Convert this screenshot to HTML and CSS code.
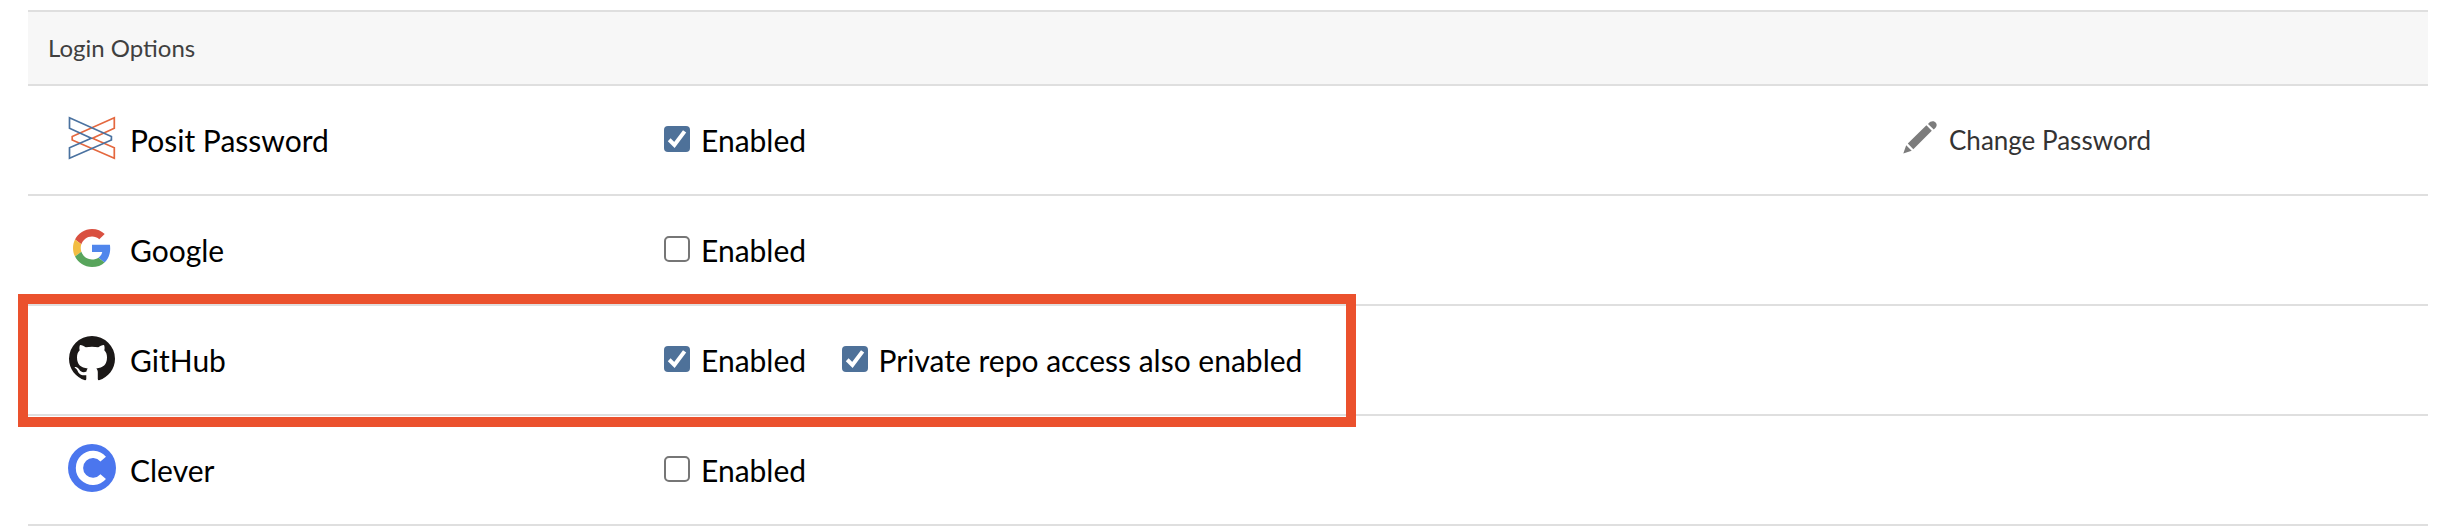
FILE: index.html
```html
<!DOCTYPE html>
<html lang="en">
<head>
<meta charset="utf-8">
<title>Login Options</title>
<link rel="stylesheet" href="styles.css">
</head>
<body>
<main class="panel">
  <header class="panel-head">Login Options</header>

  <section class="row">
    <div class="provider">
      <svg class="logo" viewBox="0 0 48 48" fill="none" stroke-width="1.7">
        <path stroke="#e4683f" d="M46.300 3.800V14.300L24.500 24.200L46.300 33.800V44.300L4.200 26V22.500Z"/>
        <path stroke="#4a72a0" d="M1.500 3.800V14.300L23.300 24.200L1.500 33.800V44.300L43.400 26V22.500Z"/>
      </svg>
      <span class="name">Posit Password</span>
    </div>
    <div class="options">
      <label class="option"><span class="box checked"><svg viewBox="0 0 26 26"><path d="M5.200 13.800L10.400 18.900L20.600 5.400"/></svg></span><span class="text">Enabled</span></label>
    </div>
    <a class="action">
      <svg class="pencil" viewBox="0 0 34 33"><path d="M0.300 32.600L3.200 24.200L8.700 29.700ZM4.800 22.500L23.400 4.200L28.800 9.700L10.300 28.200ZM25 2.900C27.800-.4 31.300-.3 33 2C34.400 4.200 33.600 6.200 30.800 8.500Z"/></svg>
      <span>Change Password</span>
    </a>
  </section>

  <section class="row">
    <div class="provider">
      <svg class="logo google" viewBox="0 0 48 48">
        <path fill="#d95040" d="M24 9.500c3.540 0 6.710 1.220 9.210 3.600l6.850-6.850C35.900 2.380 30.470 0 24 0 14.620 0 6.510 5.380 2.560 13.220l7.980 6.190C12.430 13.720 17.740 9.500 24 9.500z"/>
        <path fill="#5086ec" d="M46.980 24.550c0-1.570-.15-3.090-.38-4.550H24v9.020h12.940c-.58 2.960-2.260 5.480-4.780 7.180l7.730 6c4.510-4.180 7.090-10.360 7.090-17.650z"/>
        <path fill="#f2bd42" d="M10.530 28.590c-.48-1.450-.76-2.990-.76-4.590s.27-3.140.76-4.590l-7.980-6.190C.92 16.460 0 20.120 0 24c0 3.880.92 7.540 2.560 10.780l7.970-6.190z"/>
        <path fill="#58a55c" d="M24 48c6.480 0 11.930-2.130 15.890-5.810l-7.730-6c-2.150 1.450-4.920 2.300-8.160 2.300-6.260 0-11.570-4.220-13.470-9.910l-7.980 6.190C6.510 42.620 14.620 48 24 48z"/>
      </svg>
      <span class="name">Google</span>
    </div>
    <div class="options">
      <label class="option"><span class="box"></span><span class="text">Enabled</span></label>
    </div>
  </section>

  <section class="row highlighted">
    <div class="provider">
      <svg class="logo github" viewBox="0 0 46 45">
        <path fill="#1b1817" d="M23 0A23 22.800 0 0 0 0 22.800C0 32.700 6.600 41.500 16 44.300Q17.300 44.300 17.300 43V39.200C11.500 40 9.800 37.500 8.800 35.300C8 33.500 7 32.500 5.500 31.500C6.800 30.500 8.900 31.600 10.200 33.500C12 36.400 14.600 36.900 17.500 35.600C17.500 34.200 18 33.200 18.700 32.400C12 31.600 8 28.800 8 21.200C8 18.300 8.900 16 10.700 14.200C10.200 12.600 10.300 10.600 11 8.900C13 8.800 15 10 16.800 11.300C20.700 10.400 25.300 10.400 29.200 11.300C31 10 33 8.800 35 8.900C35.700 10.600 35.800 12.600 35.300 14.200C37.100 16 38 18.300 38 21.200C38 28.800 34 31.600 27.300 32.400C28.300 33.400 28.800 34.700 28.800 36.500V43Q28.800 44.300 30 44.300C39.400 41.500 46 32.700 46 22.800A23 22.800 0 0 0 23 0Z"/>
      </svg>
      <span class="name">GitHub</span>
    </div>
    <div class="options">
      <label class="option"><span class="box checked"><svg viewBox="0 0 26 26"><path d="M5.200 13.800L10.400 18.900L20.600 5.400"/></svg></span><span class="text">Enabled</span></label>
      <label class="option"><span class="box checked"><svg viewBox="0 0 26 26"><path d="M5.200 13.800L10.400 18.900L20.600 5.400"/></svg></span><span class="text">Private repo access also enabled</span></label>
    </div>
  </section>

  <section class="row">
    <div class="provider">
      <svg class="logo" viewBox="0 0 48 48">
        <circle cx="24" cy="24" r="24" fill="#4b76ee"/>
        <path fill="none" stroke="#fff" stroke-width="7.300" d="M35.200 15.100A13.500 13.500 0 1 0 35.200 32.700"/>
      </svg>
      <span class="name">Clever</span>
    </div>
    <div class="options">
      <label class="option"><span class="box"></span><span class="text">Enabled</span></label>
    </div>
  </section>
</main>
</body>
</html>
```
FILE: styles.css
```css
*,
*::after {
  box-sizing: border-box;
}

body {
  margin: 0;
  background: #fff;
  color: #000;
  font-family: Lato, "Open Sans", sans-serif;
  font-size: 30px;
  overflow: hidden;
}

.panel {
  margin: 10px 10px 0 28px;
}

.panel-head {
  height: 76px;
  padding: 0 20px 2px;
  border-top: 2px solid #dfdfdf;
  border-bottom: 2px solid #dfdfdf;
  background: #f7f7f7;
  color: #404040;
  font-size: 24px;
  line-height: 72px;
}

.row {
  position: relative;
  display: grid;
  grid-template-columns: 636px 1239px 1fr;
  align-items: center;
  height: 110px;
  border-bottom: 2px solid #dfdfdf;
  line-height: 36px;
  white-space: nowrap;
}

/* Callout frame around the GitHub row */
.highlighted::after {
  content: "";
  position: absolute;
  left: -10px;
  top: -12px;
  width: 1338px;
  height: 133px;
  border: 10px solid #eb512d;
  z-index: 1;
}

.provider {
  display: flex;
  align-items: center;
  gap: 14px;
  padding-left: 40px;
}

.logo {
  width: 48px;
  height: 48px;
  margin-bottom: 4px;
}

.google {
  height: 38px;
}

.github {
  width: 46px;
  height: 45px;
  margin: 0 1px 4px;
}

.options {
  display: flex;
  align-items: center;
  gap: 35.5px;
}

.option {
  display: flex;
  align-items: center;
  gap: 11px;
}

.box {
  width: 26px;
  height: 26px;
  margin-bottom: 2px;
  border: 2px solid #767676;
  border-radius: 5px;
}

.checked {
  border: 0;
  border-radius: 4px;
  background: #4e7199;
}

.box svg {
  display: block;
  fill: none;
  stroke: #fff;
  stroke-width: 4;
}

.action {
  display: flex;
  align-items: center;
  gap: 12px;
  color: #333;
  font-size: 26px;
}

.pencil {
  width: 34px;
  height: 33px;
  margin-bottom: 5px;
  fill: #7c7c7c;
}
```
